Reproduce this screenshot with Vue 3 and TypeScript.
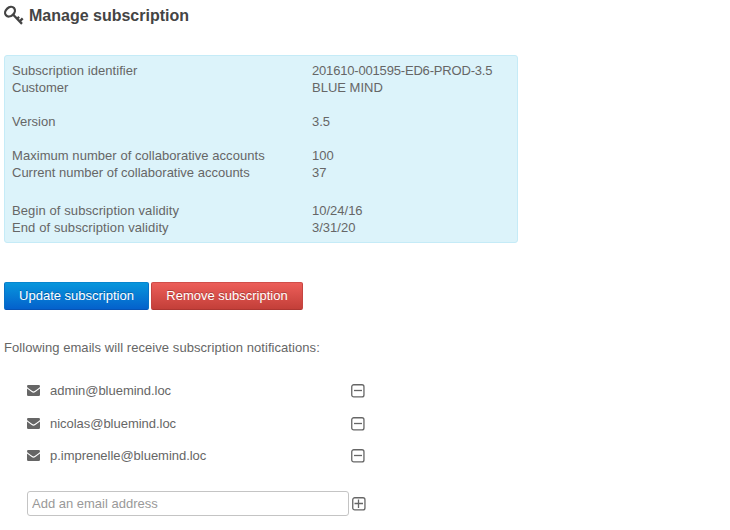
<script setup lang="ts">
import { ref } from 'vue'

interface Detail { label: string; value: string; labelClass?: string; valueClass?: string }

const groups: Detail[][] = [
  [
    { label: 'Subscription identifier', value: '201610-001595-ED6-PROD-3.5', labelClass: 'loose', valueClass: 'identifier' },
    { label: 'Customer', value: 'BLUE MIND' },
  ],
  [{ label: 'Version', value: '3.5' }],
  [
    { label: 'Maximum number of collaborative accounts', value: '100', labelClass: 'loose' },
    { label: 'Current number of collaborative accounts', value: '37' },
  ],
  [
    { label: 'Begin of subscription validity', value: '10/24/16', labelClass: 'looser' },
    { label: 'End of subscription validity', value: '3/31/20', labelClass: 'looser' },
  ],
]

const emails = ref<string[]>(['admin@bluemind.loc', 'nicolas@bluemind.loc', 'p.imprenelle@bluemind.loc'])
const newEmail = ref('')

function addEmail(): void {
  const value = newEmail.value.trim()
  if (value) {
    emails.value.push(value)
    newEmail.value = ''
  }
}

function removeEmail(index: number): void {
  emails.value.splice(index, 1)
}
</script>

<template>
  <main class="page">
    <h1 class="title">
      <svg class="key" viewBox="0 0 20 20" aria-hidden="true">
        <ellipse cx="6" cy="5.7" rx="5.4" ry="4.2" transform="rotate(-42 6 5.7)" />
        <path d="M9 8.5l9 9.4M13.2 12.8l1.9-1.9M16 15.1l2.7-2.7" />
      </svg>
      <span>Manage subscription</span>
    </h1>

    <section class="info">
      <dl v-for="(group, g) in groups" :key="g" class="group">
        <div v-for="item in group" :key="item.label" class="row">
          <dt :class="item.labelClass">{{ item.label }}</dt>
          <dd :class="item.valueClass">{{ item.value }}</dd>
        </div>
      </dl>
    </section>

    <div class="actions">
      <button class="btn primary" type="button">Update subscription</button>
      <button class="btn danger" type="button">Remove subscription</button>
    </div>

    <p class="note">Following emails will receive subscription notifications:</p>

    <ul class="emails">
      <li v-for="(email, i) in emails" :key="email" class="email">
        <svg class="mail" viewBox="0 0 13 11" aria-hidden="true">
          <path d="M0 1.2Q0 0 1.2 0h10.6Q13 0 13 1.2q0 1-1.1 1.8L7.7 6Q6.5 6.9 5.3 6L1.1 3Q0 2.2 0 1.2Z" />
          <path d="M0 3.5q.3.3.7.6l4 2.9q1.8 1.3 3.6 0l4-2.9q.4-.3.7-.6v6.2q0 1.3-1.3 1.3H1.3Q0 11 0 9.7Z" />
        </svg>
        <span class="address">{{ email }}</span>
        <button class="toggle" type="button" aria-label="Remove" @click="removeEmail(i)">
          <svg viewBox="0 0 14 14"><rect x=".75" y=".75" width="12.2" height="12.2" rx="2" /><path d="M3 6.5h8" /></svg>
        </button>
      </li>
    </ul>

    <form class="add" @submit.prevent="addEmail">
      <input v-model="newEmail" class="field" type="text" placeholder="Add an email address" />
      <button class="toggle" type="submit" aria-label="Add">
        <svg viewBox="0 0 14 14"><rect x=".75" y=".75" width="12.2" height="12.2" rx="2" /><path d="M2.5 6.5h8.5M6.5 2.5v8.5" /></svg>
      </button>
    </form>
  </main>
</template>

<style>
body {
  background: #fff;
}
</style>

<style scoped>
.page {
  box-sizing: border-box;
  width: 730px;
  height: 530px;
  padding: 6px 4px 0;
  overflow: hidden;
  color: #666;
  font: 13px/17px "Liberation Sans", Arial, sans-serif;
}
.title {
  display: flex;
  align-items: flex-start;
  gap: 5px;
  height: 49px;
  margin: 0;
  color: #444;
  font-size: 16px;
  line-height: 19px;
}
.key {
  width: 20px;
  height: 20px;
  overflow: visible;
  fill: none;
  stroke: #444;
  stroke-width: 2.3;
}
.info {
  box-sizing: border-box;
  width: 514px;
  height: 188px;
  padding: 6px 7px;
  border: 1px solid #c5ebf7;
  border-radius: 3px;
  background: #dcf3fa;
}
.group {
  margin: 0 0 17px;
}
.group:last-child {
  margin: 21px 0 0;
}
.row {
  display: flex;
}
dt {
  width: 300px;
}
dd {
  margin: 0;
}
.loose {
  letter-spacing: .05px;
}
.looser {
  letter-spacing: .1px;
}
.identifier {
  letter-spacing: -.18px;
}
.actions {
  display: flex;
  gap: 2px;
  margin-top: 39px;
}
.btn {
  box-sizing: border-box;
  height: 28px;
  padding: 0 0 1px;
  border: 1px solid;
  border-radius: 2px;
  color: #fff;
  font: inherit;
  text-shadow: 0 -1px 0 rgba(0, 0, 0, .25);
}
.primary {
  width: 145px;
  border-color: #0785cf #0872c6 #0753b5;
  background: linear-gradient(#0896dc, #0461cc);
}
.danger {
  width: 152px;
  border-color: #d14e4a #c54541 #ad3632;
  background: linear-gradient(#ec5e59, #c33f39);
}
.note {
  margin: 29px 0 0;
  letter-spacing: .065px;
}
.emails {
  width: 338px;
  margin: 18px 0 0 23px;
  padding: 0;
  list-style: none;
}
.email {
  display: flex;
  align-items: center;
  height: 33px;
}
.email:last-child {
  height: 31px;
}
.mail {
  width: 13px;
  height: 11px;
  margin-right: 10px;
  fill: #666;
}
.address {
  flex: 1;
  letter-spacing: -.03px;
}
.toggle {
  width: 14px;
  height: 14px;
  margin: 1px 0 0;
  padding: 0;
  border: 0;
  background: none;
}
.toggle svg {
  display: block;
  width: 14px;
  height: 14px;
  fill: none;
  stroke: #666;
  stroke-width: 1.3;
}
.add {
  display: flex;
  align-items: center;
  gap: 3px;
  margin: 20px 0 0 23px;
}
.field {
  box-sizing: border-box;
  width: 322px;
  height: 25px;
  padding: 0 4px;
  border: 1px solid #c4c4c4;
  border-radius: 3px;
  outline: none;
  background: #fff;
  color: #666;
  font: inherit;
}
.field::placeholder {
  color: #999;
  opacity: 1;
}
</style>
